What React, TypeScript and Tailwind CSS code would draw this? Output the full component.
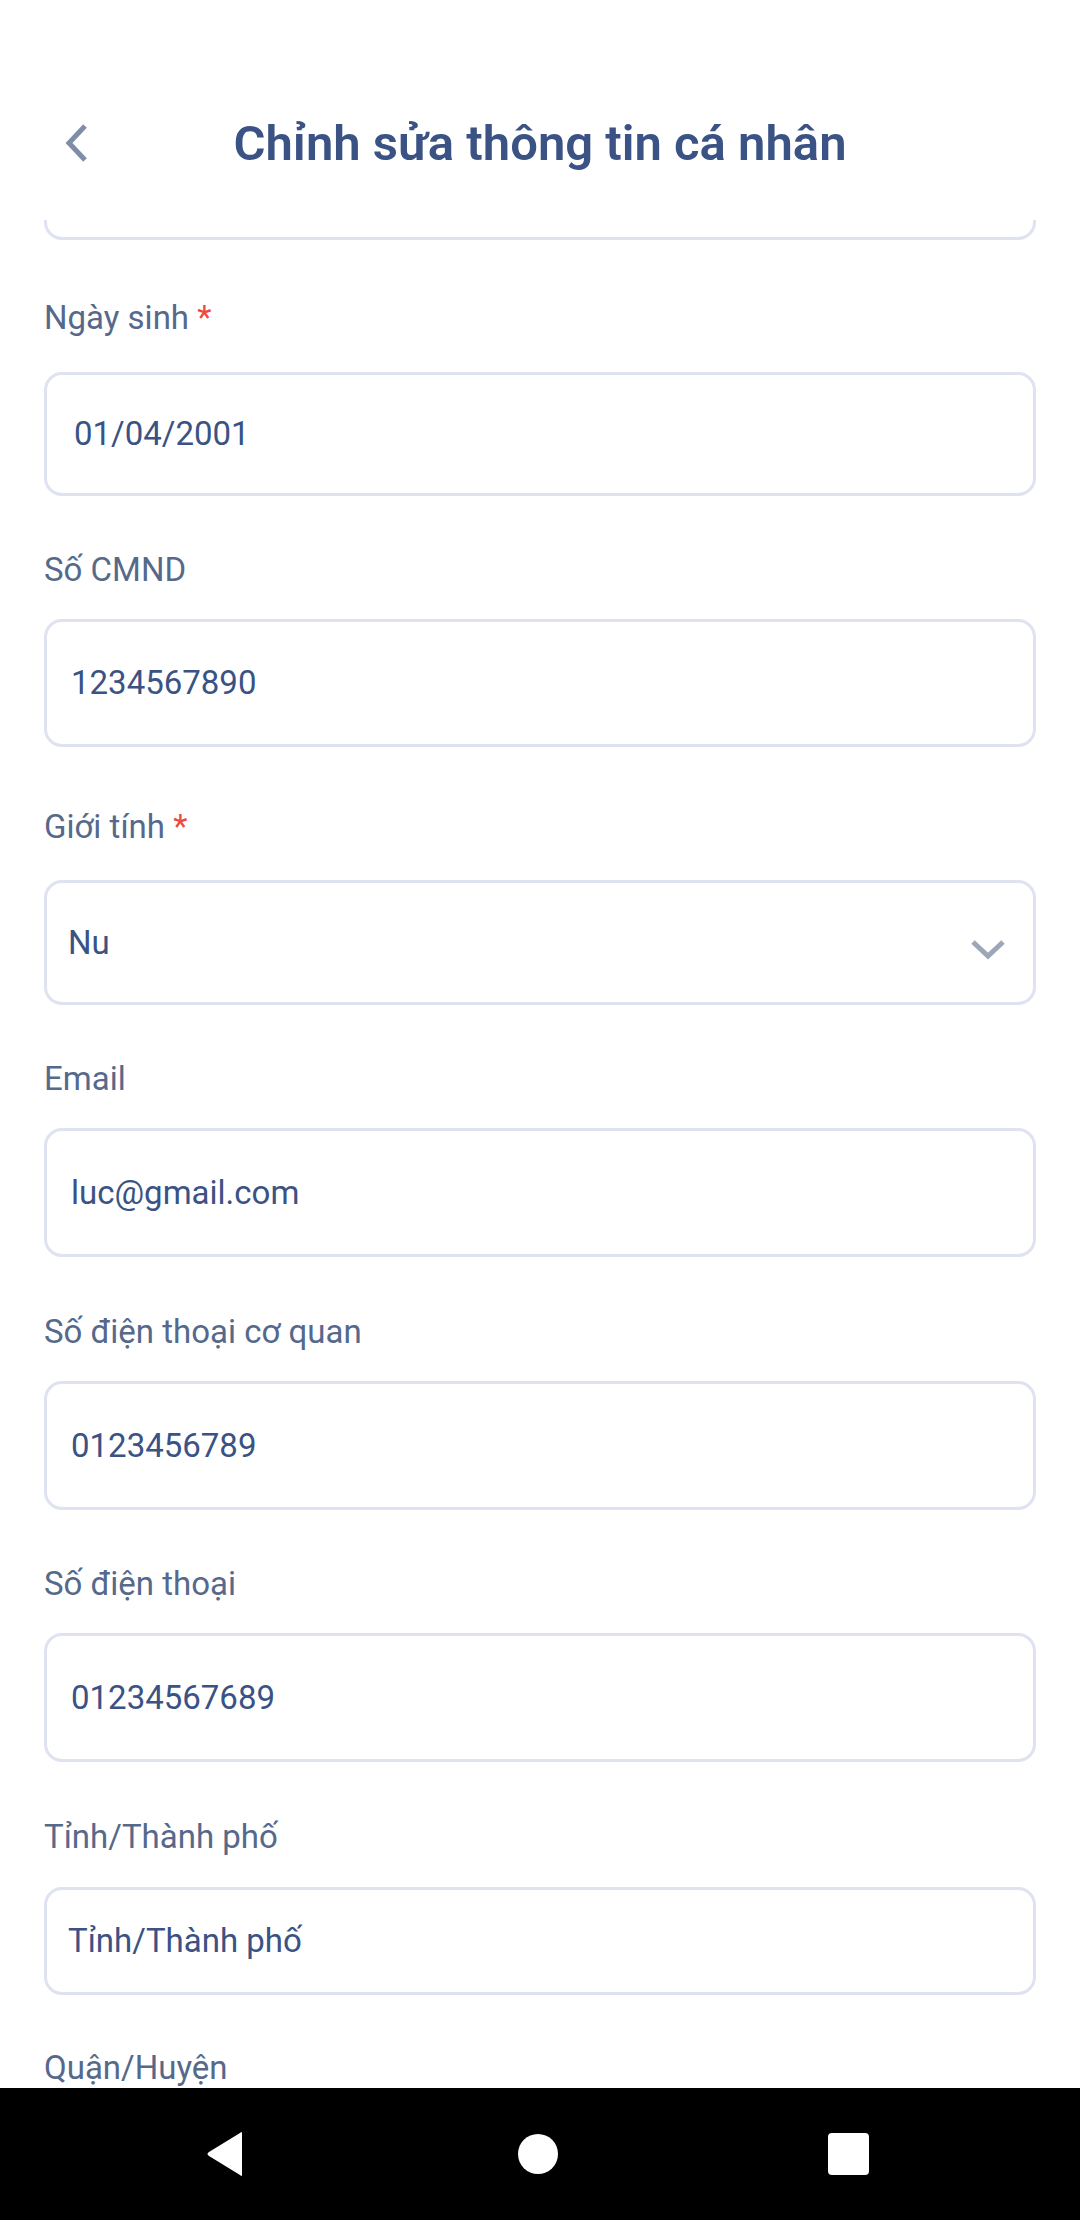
import * as React from "react";

type Field = {
  label: string;
  value?: string;
  required?: boolean;
  select?: boolean;
  wrap: string;
  labelGap: string;
  box: string;
};

const fields: Field[] = [
  { label: "Ngày sinh", value: "01/04/2001", required: true, wrap: "mt-[59px]", labelGap: "mt-[35px]", box: "h-[124px] pl-[27px]" },
  { label: "Số CMND", value: "1234567890", wrap: "mt-[55px]", labelGap: "mt-[30px]", box: "h-[128px] pl-[24px]" },
  { label: "Giới tính", value: "Nu", required: true, select: true, wrap: "mt-[61px]", labelGap: "mt-[34px]", box: "h-[125px] pl-[21px] pr-[26px]" },
  { label: "Email", value: "luc@gmail.com", wrap: "mt-[55px]", labelGap: "mt-[30px]", box: "h-[129px] pl-[24px]" },
  { label: "Số điện thoại cơ quan", value: "0123456789", wrap: "mt-[56px]", labelGap: "mt-[30px]", box: "h-[129px] pl-[24px]" },
  { label: "Số điện thoại", value: "01234567689", wrap: "mt-[55px]", labelGap: "mt-[30px]", box: "h-[129px] pl-[24px]" },
  { label: "Tỉnh/Thành phố", value: "Tỉnh/Thành phố", wrap: "mt-[56px]", labelGap: "mt-[31px]", box: "h-[108px] pl-[21px]" },
];

function FormField({ f }: { f: Field }) {
  return (
    <div className={f.wrap}>
      <div className="h-[38px] leading-[38px] text-[33px] text-[#56698b]">
        {f.label}
        {f.required && <span className="text-[#f0483e]"> *</span>}
      </div>
      <div
        className={`${f.labelGap} ${f.box} flex items-center justify-between rounded-[18px] border-[3px] border-[#dfe2f1] bg-white`}
      >
        <span className="text-[33px] text-[#3a5284]">{f.value}</span>
        {f.select && (
          <svg width="38" height="26" viewBox="0 0 38 26" className="mt-[14px]">
            <path d="M4 5 L19 19 L34 5" fill="none" stroke="#9ca7b7" strokeWidth="5" />
          </svg>
        )}
      </div>
    </div>
  );
}

export default function App() {
  return (
    <div className="flex h-[2220px] w-[1080px] flex-col overflow-hidden bg-white font-['Roboto',sans-serif]">
      {/* Header */}
      <div className="h-[220px] shrink-0 pt-[103px]">
        <div className="grid h-[80px] grid-cols-[1fr_auto_1fr] items-center">
          <div className="pl-[63px]">
            <svg width="28" height="42" viewBox="0 0 28 42">
              <path d="M22 4 L6 21 L22 38" fill="none" stroke="#7e8da8" strokeWidth="5" />
            </svg>
          </div>
          <h1 className="text-[49px] font-semibold leading-none text-[#3b5284]">Chỉnh sửa thông tin cá nhân</h1>
          <div />
        </div>
      </div>

      {/* Form */}
      <div className="flex-1 overflow-hidden px-[44px]">
        <div className="h-[20px] overflow-hidden">
          <div className="-mt-[104px] h-[124px] rounded-[18px] border-[3px] border-[#dfe2f1]" />
        </div>
        {fields.map((f) => (
          <FormField key={f.label} f={f} />
        ))}
        <div className="mt-[54px] h-[38px] leading-[38px] text-[33px] text-[#56698b]">Quận/Huyện</div>
      </div>

      {/* Android nav */}
      <div className="flex h-[132px] shrink-0 items-center bg-black pl-[205px]">
        <svg width="40" height="48" viewBox="0 0 40 48">
          <path d="M37 3 L37 45 Q37 47 35 45 L4 26 Q1 24 4 22 L35 3 Q37 1 37 3 Z" fill="#fff" />
        </svg>
        <div className="ml-[273px] h-[40px] w-[40px] rounded-full bg-white" />
        <div className="ml-[270px] h-[42px] w-[41px] rounded-[4px] bg-white" />
      </div>
    </div>
  );
}
